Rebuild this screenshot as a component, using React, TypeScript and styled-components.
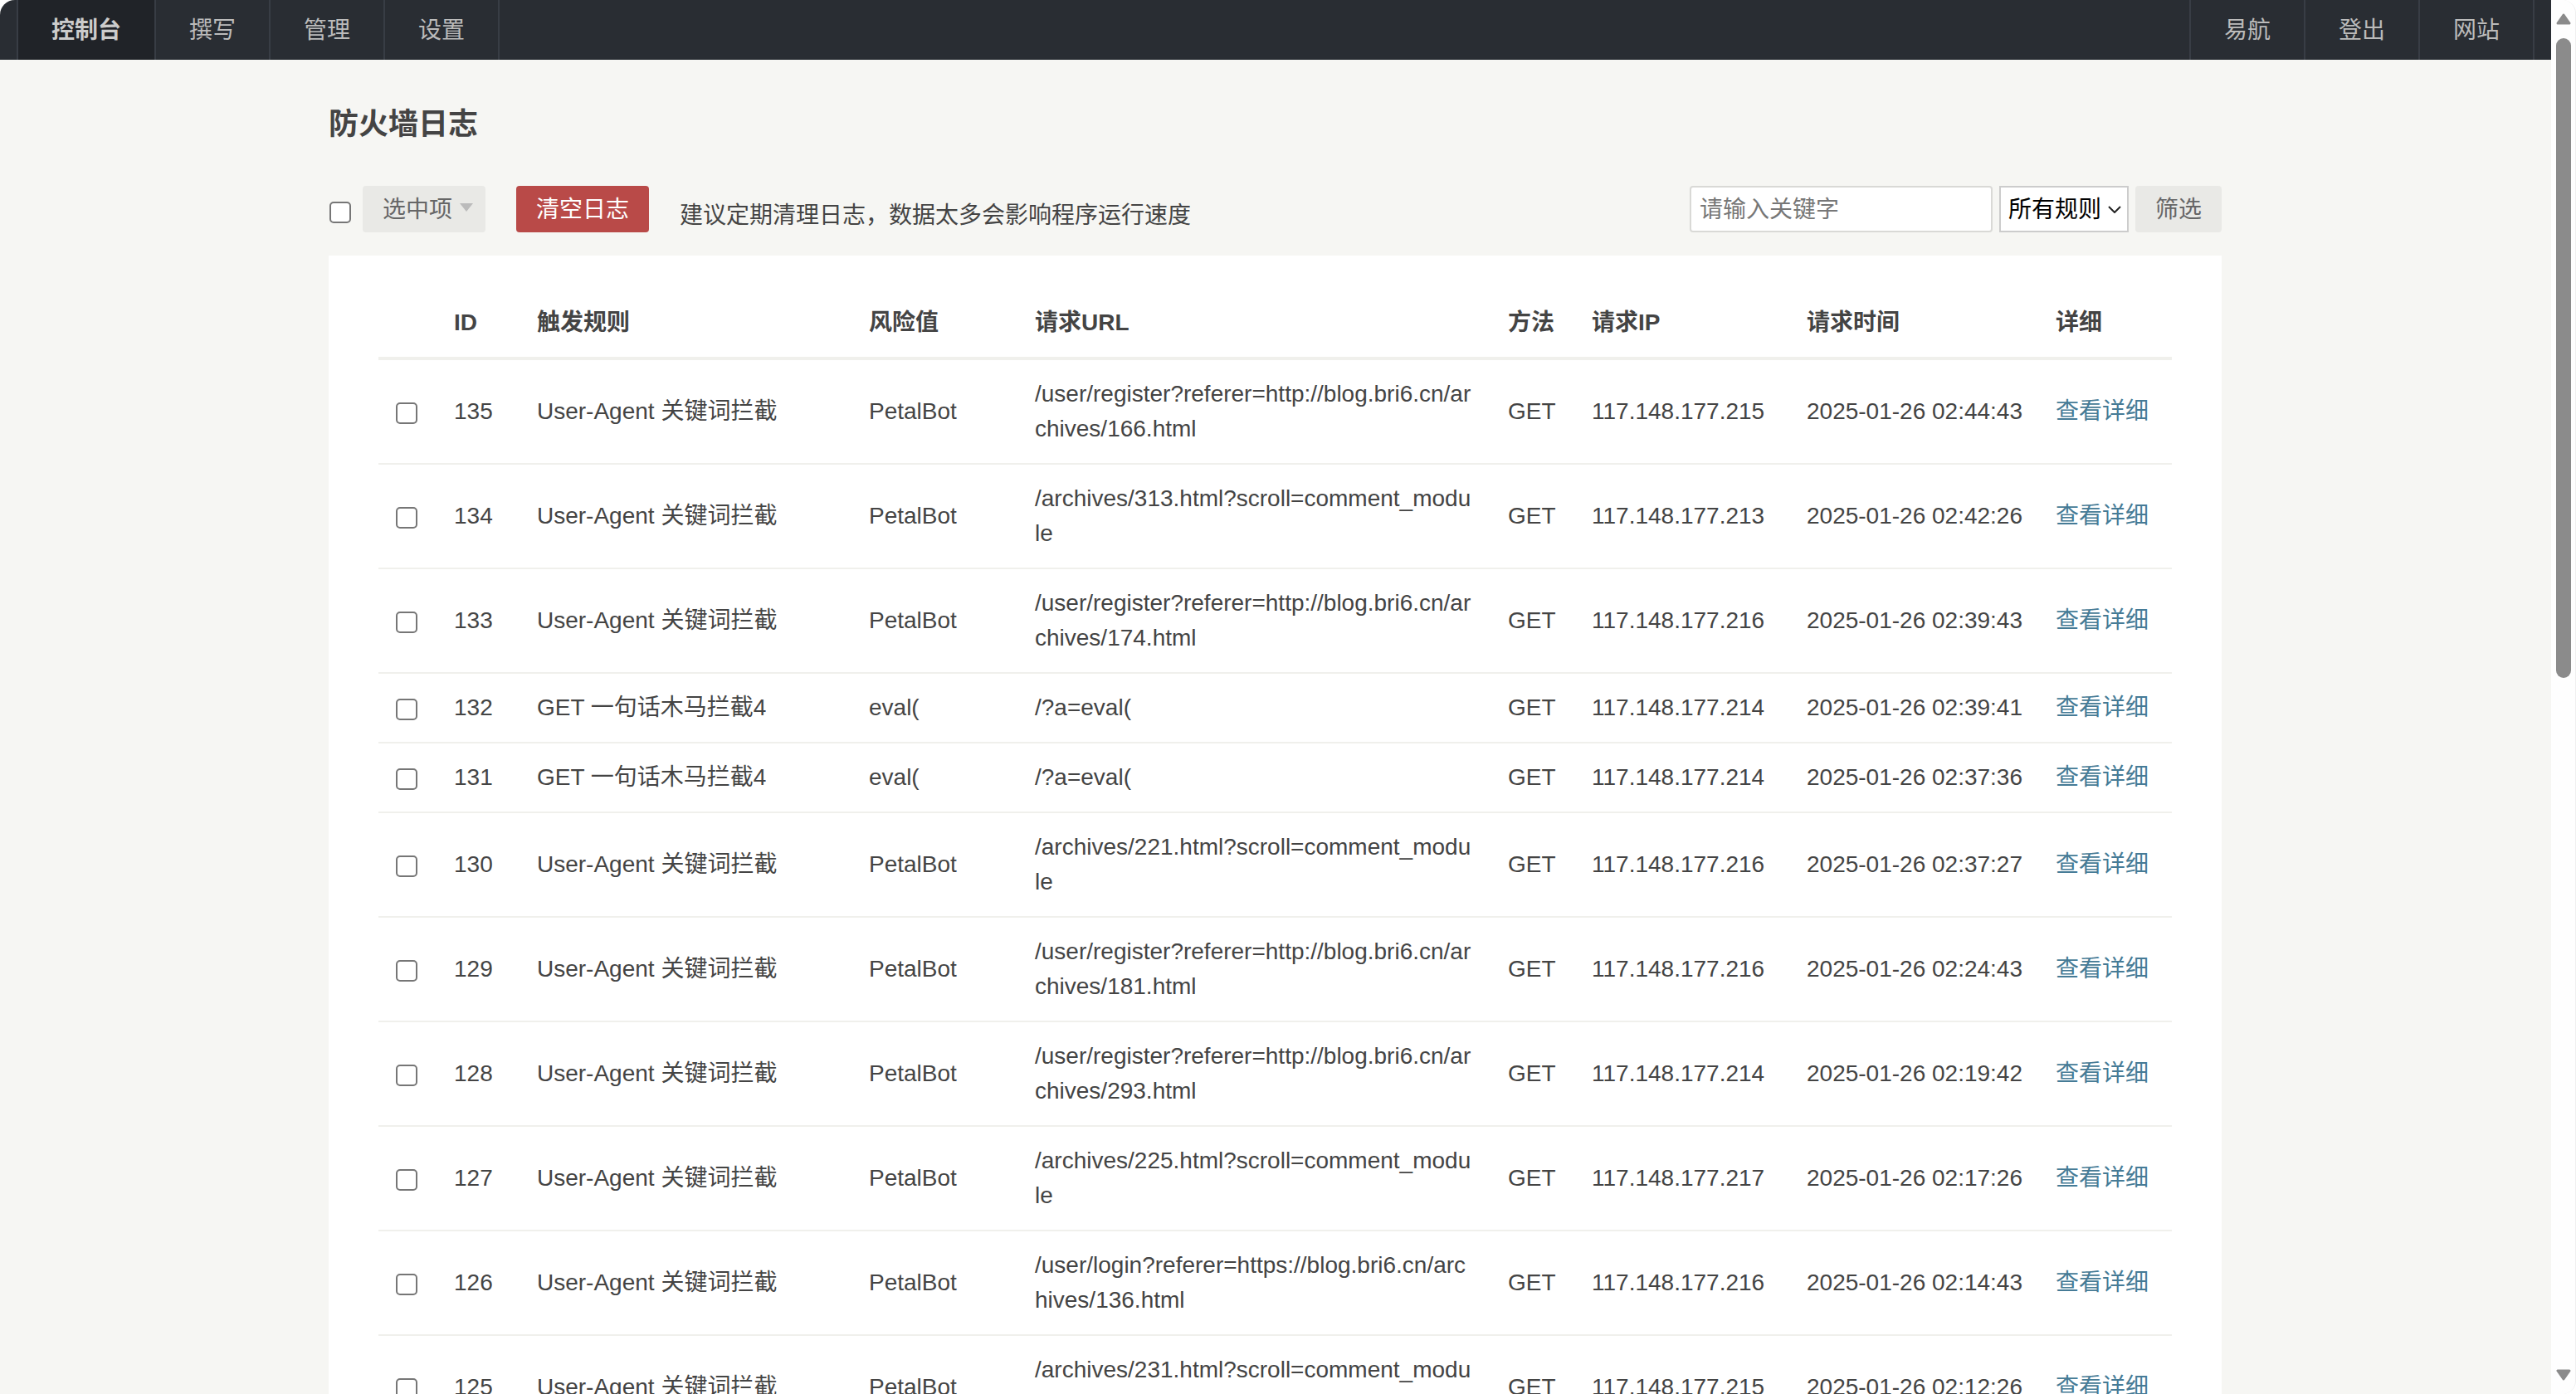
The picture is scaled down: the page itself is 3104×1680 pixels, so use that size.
import React from 'react';
import styled, { createGlobalStyle } from 'styled-components';

const Global = createGlobalStyle`
  html, body { margin: 0; padding: 0; height: 100%; overflow: hidden; background: #fff; }
  #root { height: 100%; }
  * { box-sizing: border-box; }
  body { font-family: "Liberation Sans", "Noto Sans CJK SC", sans-serif; font-size: 28px; line-height: 42px; color: #444; }
`;

const Frame = styled.div`
  display: flex;
  height: 1680px;
  width: 3104px;
  overflow: hidden;
  background: #fff;
  border-top-left-radius: 18px;
`;
const Main = styled.div`
  flex: 0 0 3074px;
  height: 100%;
  overflow: hidden;
  background: #f6f6f3;
`;
const Nav = styled.nav`
  display: flex;
  justify-content: space-between;
  height: 72px;
  padding: 0 20px;
  background: #292d33;
`;
const NavGroup = styled.div`
  display: flex;
  border-left: 2px solid #383d45;
`;
const NavItem = styled.a<{ $active?: boolean }>`
  display: block;
  padding: 2px 40px 0;
  line-height: 70px;
  color: ${p => (p.$active ? '#ccc' : '#bbb')};
  font-weight: ${p => (p.$active ? 700 : 400)};
  background: ${p => (p.$active ? '#202328' : 'transparent')};
  border-right: 2px solid #383d45;
`;
const Container = styled.main`
  width: 2281px;
  margin: 0 397px 0 396px;
`;
const Title = styled.h2`
  margin: 0;
  padding: 51px 0 47px;
  font-size: 36px;
  line-height: 54px;
  font-weight: 700;
  color: #444;
`;
const Toolbar = styled.div`
  display: flex;
  justify-content: space-between;
  height: 56px;
  margin-bottom: 28px;
`;
const ToolGroup = styled.div`
  display: flex;
  align-items: flex-start;
`;
const Check = styled.input.attrs({ type: 'checkbox' })`
  appearance: none;
  display: block;
  width: 26px;
  height: 26px;
  margin: 0;
  background: #fff;
  border: 2px solid #767676;
  border-radius: 5px;
`;
const ToolCheck = styled(Check)`
  margin: 19px 14px 0 1px;
`;
const Button = styled.button<{ $danger?: boolean }>`
  height: 56px;
  padding: 1px 24px 0;
  border: 0;
  border-radius: 4px;
  font: inherit;
  line-height: 55px;
  color: ${p => (p.$danger ? '#fff' : '#666')};
  background: ${p => (p.$danger ? '#b94a48' : '#e9e9e6')};
`;
const MenuButton = styled(Button)`
  display: flex;
  align-items: center;
  padding: 1px 15px 0 24px;
  margin-right: 37px;
`;
const Caret = styled.i`
  width: 0;
  height: 0;
  margin: -6px 0 0 9px;
  border-style: solid;
  border-width: 10px 8px 0;
  border-color: #bbb transparent transparent;
`;
const Tip = styled.span`
  margin: 8px 0 0 37px;
  line-height: 56px;
`;
const Search = styled.input`
  width: 365px;
  height: 56px;
  margin-right: 8px;
  padding: 2px 10px 0;
  border: 2px solid #d9d9d6;
  border-radius: 4px;
  font: inherit;
  color: #444;
  background: #fff;
  &::placeholder { color: #777; opacity: 1; }
`;
const chevron = "data:image/svg+xml,%3Csvg xmlns='http://www.w3.org/2000/svg' width='16' height='9'%3E%3Cpath d='M1 1l7 7 7-7' fill='none' stroke='%23222' stroke-width='2'/%3E%3C/svg%3E";
const RuleSelect = styled.select`
  appearance: none;
  width: 156px;
  height: 56px;
  margin-right: 8px;
  padding: 2px 0 0 9px;
  border: 2px solid #ccc;
  border-radius: 0;
  font: inherit;
  color: #000;
  background: #fff url("${chevron}") no-repeat 129px 22px;
`;
const Panel = styled.section`
  padding: 60px;
  background: #fff;
`;
const Table = styled.table`
  width: 100%;
  table-layout: fixed;
  border-collapse: separate;
  border-spacing: 0;
`;
const Th = styled.th`
  padding: 0 20px 20px;
  border-bottom: 4px solid #f0f0ec;
  text-align: left;
  font-weight: 700;
  color: #444;
`;
const Td = styled.td<{ $url?: boolean }>`
  padding: 20px;
  border-bottom: 2px solid #f0f0ec;
  vertical-align: middle;
  white-space: ${p => (p.$url ? 'normal' : 'nowrap')};
  word-break: ${p => (p.$url ? 'break-all' : 'normal')};
`;
const RowCheck = styled(Check)`
  margin: 4px 0 0 1px;
`;
const DetailLink = styled.a`
  color: #467b96;
`;
const Rail = styled.aside`
  flex: 0 0 30px;
  display: flex;
  flex-direction: column;
  align-items: center;
  height: 100%;
  padding: 16px 0;
  background: #fefefe;
  border-right: 1px solid #f0f0f0;
  border-radius: 0 16px 16px 0;
`;
const RailArrow = styled.svg`
  display: block;
  flex: none;
  width: 18px;
  height: 14px;
  fill: #8b8b8b;
  stroke: #8b8b8b;
  stroke-width: 3;
  stroke-linejoin: round;
`;
const Thumb = styled.div`
  width: 18px;
  height: 771px;
  margin-top: 16px;
  border-radius: 9px;
  background: #8b8b8b;
`;
const RailSpacer = styled.div`
  flex: 1;
`;

const widths = [71, 100, 400, 200, 570, 101, 259, 300, 160];
const heads = ['', 'ID', '触发规则', '风险值', '请求URL', '方法', '请求IP', '请求时间', '详细'];
const UA = 'User-Agent 关键词拦截';
const SH = 'GET 一句话木马拦截4';
const rows: [number, string, string, string, string, string][] = [
  [135, UA, 'PetalBot', '/user/register?referer=http://blog.bri6.cn/archives/166.html', '117.148.177.215', '2025-01-26 02:44:43'],
  [134, UA, 'PetalBot', '/archives/313.html?scroll=comment_module', '117.148.177.213', '2025-01-26 02:42:26'],
  [133, UA, 'PetalBot', '/user/register?referer=http://blog.bri6.cn/archives/174.html', '117.148.177.216', '2025-01-26 02:39:43'],
  [132, SH, 'eval(', '/?a=eval(', '117.148.177.214', '2025-01-26 02:39:41'],
  [131, SH, 'eval(', '/?a=eval(', '117.148.177.214', '2025-01-26 02:37:36'],
  [130, UA, 'PetalBot', '/archives/221.html?scroll=comment_module', '117.148.177.216', '2025-01-26 02:37:27'],
  [129, UA, 'PetalBot', '/user/register?referer=http://blog.bri6.cn/archives/181.html', '117.148.177.216', '2025-01-26 02:24:43'],
  [128, UA, 'PetalBot', '/user/register?referer=http://blog.bri6.cn/archives/293.html', '117.148.177.214', '2025-01-26 02:19:42'],
  [127, UA, 'PetalBot', '/archives/225.html?scroll=comment_module', '117.148.177.217', '2025-01-26 02:17:26'],
  [126, UA, 'PetalBot', '/user/login?referer=https://blog.bri6.cn/archives/136.html', '117.148.177.216', '2025-01-26 02:14:43'],
  [125, UA, 'PetalBot', '/archives/231.html?scroll=comment_module', '117.148.177.215', '2025-01-26 02:12:26'],
];

export default function App() {
  return (
    <>
      <Global />
      <Frame>
        <Main>
          <Nav>
            <NavGroup>
              <NavItem $active>控制台</NavItem>
              <NavItem>撰写</NavItem>
              <NavItem>管理</NavItem>
              <NavItem>设置</NavItem>
            </NavGroup>
            <NavGroup>
              <NavItem>易航</NavItem>
              <NavItem>登出</NavItem>
              <NavItem>网站</NavItem>
            </NavGroup>
          </Nav>
          <Container>
            <Title>防火墙日志</Title>
            <Toolbar>
              <ToolGroup>
                <ToolCheck />
                <MenuButton>选中项<Caret /></MenuButton>
                <Button $danger>清空日志</Button>
                <Tip>建议定期清理日志，数据太多会影响程序运行速度</Tip>
              </ToolGroup>
              <ToolGroup>
                <Search placeholder="请输入关键字" />
                <RuleSelect defaultValue="all">
                  <option value="all">所有规则</option>
                </RuleSelect>
                <Button>筛选</Button>
              </ToolGroup>
            </Toolbar>
            <Panel>
              <Table>
                <colgroup>
                  {widths.map((w, i) => <col key={i} width={w} />)}
                </colgroup>
                <thead>
                  <tr>{heads.map((h, i) => <Th key={i}>{h}</Th>)}</tr>
                </thead>
                <tbody>
                  {rows.map(r => (
                    <tr key={r[0]}>
                      <Td><RowCheck /></Td>
                      <Td>{r[0]}</Td>
                      <Td>{r[1]}</Td>
                      <Td>{r[2]}</Td>
                      <Td $url>{r[3]}</Td>
                      <Td>GET</Td>
                      <Td>{r[4]}</Td>
                      <Td>{r[5]}</Td>
                      <Td><DetailLink>查看详细</DetailLink></Td>
                    </tr>
                  ))}
                </tbody>
              </Table>
            </Panel>
          </Container>
        </Main>
        <Rail>
          <RailArrow viewBox="0 0 18 14"><polygon points="9,2 16,12 2,12" /></RailArrow>
          <Thumb />
          <RailSpacer />
          <RailArrow viewBox="0 0 18 14"><polygon points="2,2 16,2 9,12" /></RailArrow>
        </Rail>
      </Frame>
    </>
  );
}
